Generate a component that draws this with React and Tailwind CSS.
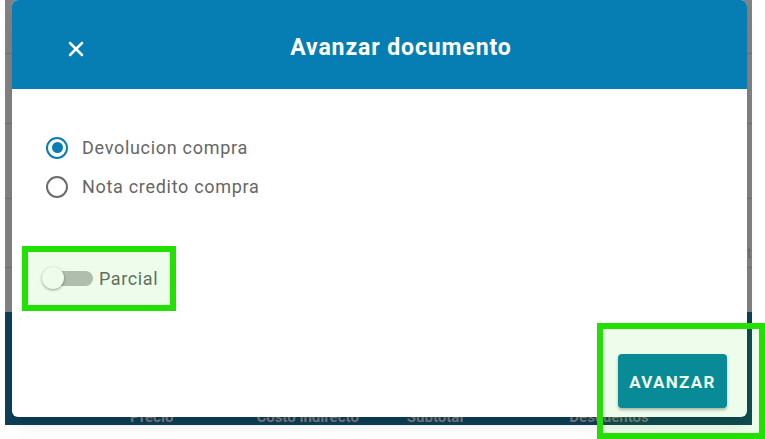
import React from "react";
import { X } from "lucide-react";

function Radio({ checked, label }) {
  return (
    <label className="flex items-center h-[39px]">
      <span
        className={
          "w-[22px] h-[22px] rounded-full border-2 flex items-center justify-center " +
          (checked ? "border-[#0a7eb0]" : "border-[#6b6b6b]")
        }
      >
        {checked && <span className="w-[11px] h-[11px] rounded-full bg-[#0a7eb0]" />}
      </span>
      <span className="ml-[14px] text-[18px] tracking-[0.7px] text-[#666666]">{label}</span>
    </label>
  );
}

export default function App() {
  const rows = [53, 123, 198, 267];
  return (
    <div className="relative w-[765px] h-[439px] bg-white overflow-hidden" style={{ fontFamily: "Roboto, 'Noto Sans', sans-serif" }}>
      {/* page behind the backdrop */}
      <div className="ml-[5px] w-[747px] h-[425px] flex flex-col">
        <div className="relative h-[312px] bg-[#828282]">
          {rows.map((y) => (
            <div key={y} className="absolute left-0 right-0 h-px bg-[#6e6e6e]" style={{ top: y }} />
          ))}
          <span className="absolute right-[0px] top-[242px] text-[15px] text-[#6a6a6a]">t</span>
        </div>
        <div className="relative flex-1 bg-[#0d4058]">
          <div className="absolute left-0 right-0 top-[98px] flex text-[15px] font-bold text-[#7c7c7c] leading-none">
            <span className="ml-[125px]">Precio</span>
            <span className="ml-[83px]">Costo indirecto</span>
            <span className="ml-[48px]">Subtotal</span>
            <span className="ml-[106px]">Descuentos</span>
          </div>
        </div>
      </div>

      {/* dialog */}
      <div className="absolute left-[12px] top-0 w-[735px] h-[417px] bg-white rounded-[6px] overflow-hidden flex flex-col shadow-lg">
        <div className="h-[89px] bg-[#067eb3] flex items-center pl-[44px] pr-[41px] pt-[8px] shrink-0">
          <button className="w-10 h-10 flex items-center justify-center text-white">
            <X size={24} strokeWidth={2.5} />
          </button>
          <h2 className="flex-1 text-center text-white text-[23px] font-bold tracking-[0.9px]">Avanzar documento</h2>
        </div>
        <div className="flex-1 flex flex-col pl-[34px] pt-[39px] pr-[20px] pb-[9px]">
          <Radio checked label="Devolucion compra" />
          <Radio label="Nota credito compra" />
          <div className="flex items-center mt-[60px] h-[24px]">
            <div className="relative w-[48px] h-[24px] flex items-center">
              <div className="absolute left-[9px] w-[38px] h-[15px] rounded-full bg-[#bcbcbc]" />
              <div className="absolute left-[-4px] w-[22px] h-[22px] rounded-full bg-white shadow-[0_1px_3px_rgba(0,0,0,0.4)]" />
            </div>
            <span className="ml-[5px] text-[18px] tracking-[0.6px] text-[#666666]">Parcial</span>
          </div>
          <div className="flex-1" />
          <div className="flex justify-end">
            <button className="w-[109px] h-[54px] pt-[3px] rounded-[4px] bg-[#0684a3] text-white text-[17px] font-bold tracking-[1.3px] shadow-[0_2px_3px_rgba(0,0,0,0.3)]">
              AVANZAR
            </button>
          </div>
        </div>
      </div>

      {/* highlight boxes */}
      <div className="absolute left-[22px] top-[246px] w-[154px] h-[65px] border-[6px] border-[#22e000] bg-[rgba(34,224,0,0.08)]" />
      <div className="absolute left-[597px] top-[323px] w-[168px] h-[116px] border-[6px] border-[#22e000] bg-[rgba(34,224,0,0.08)]" />
    </div>
  );
}
